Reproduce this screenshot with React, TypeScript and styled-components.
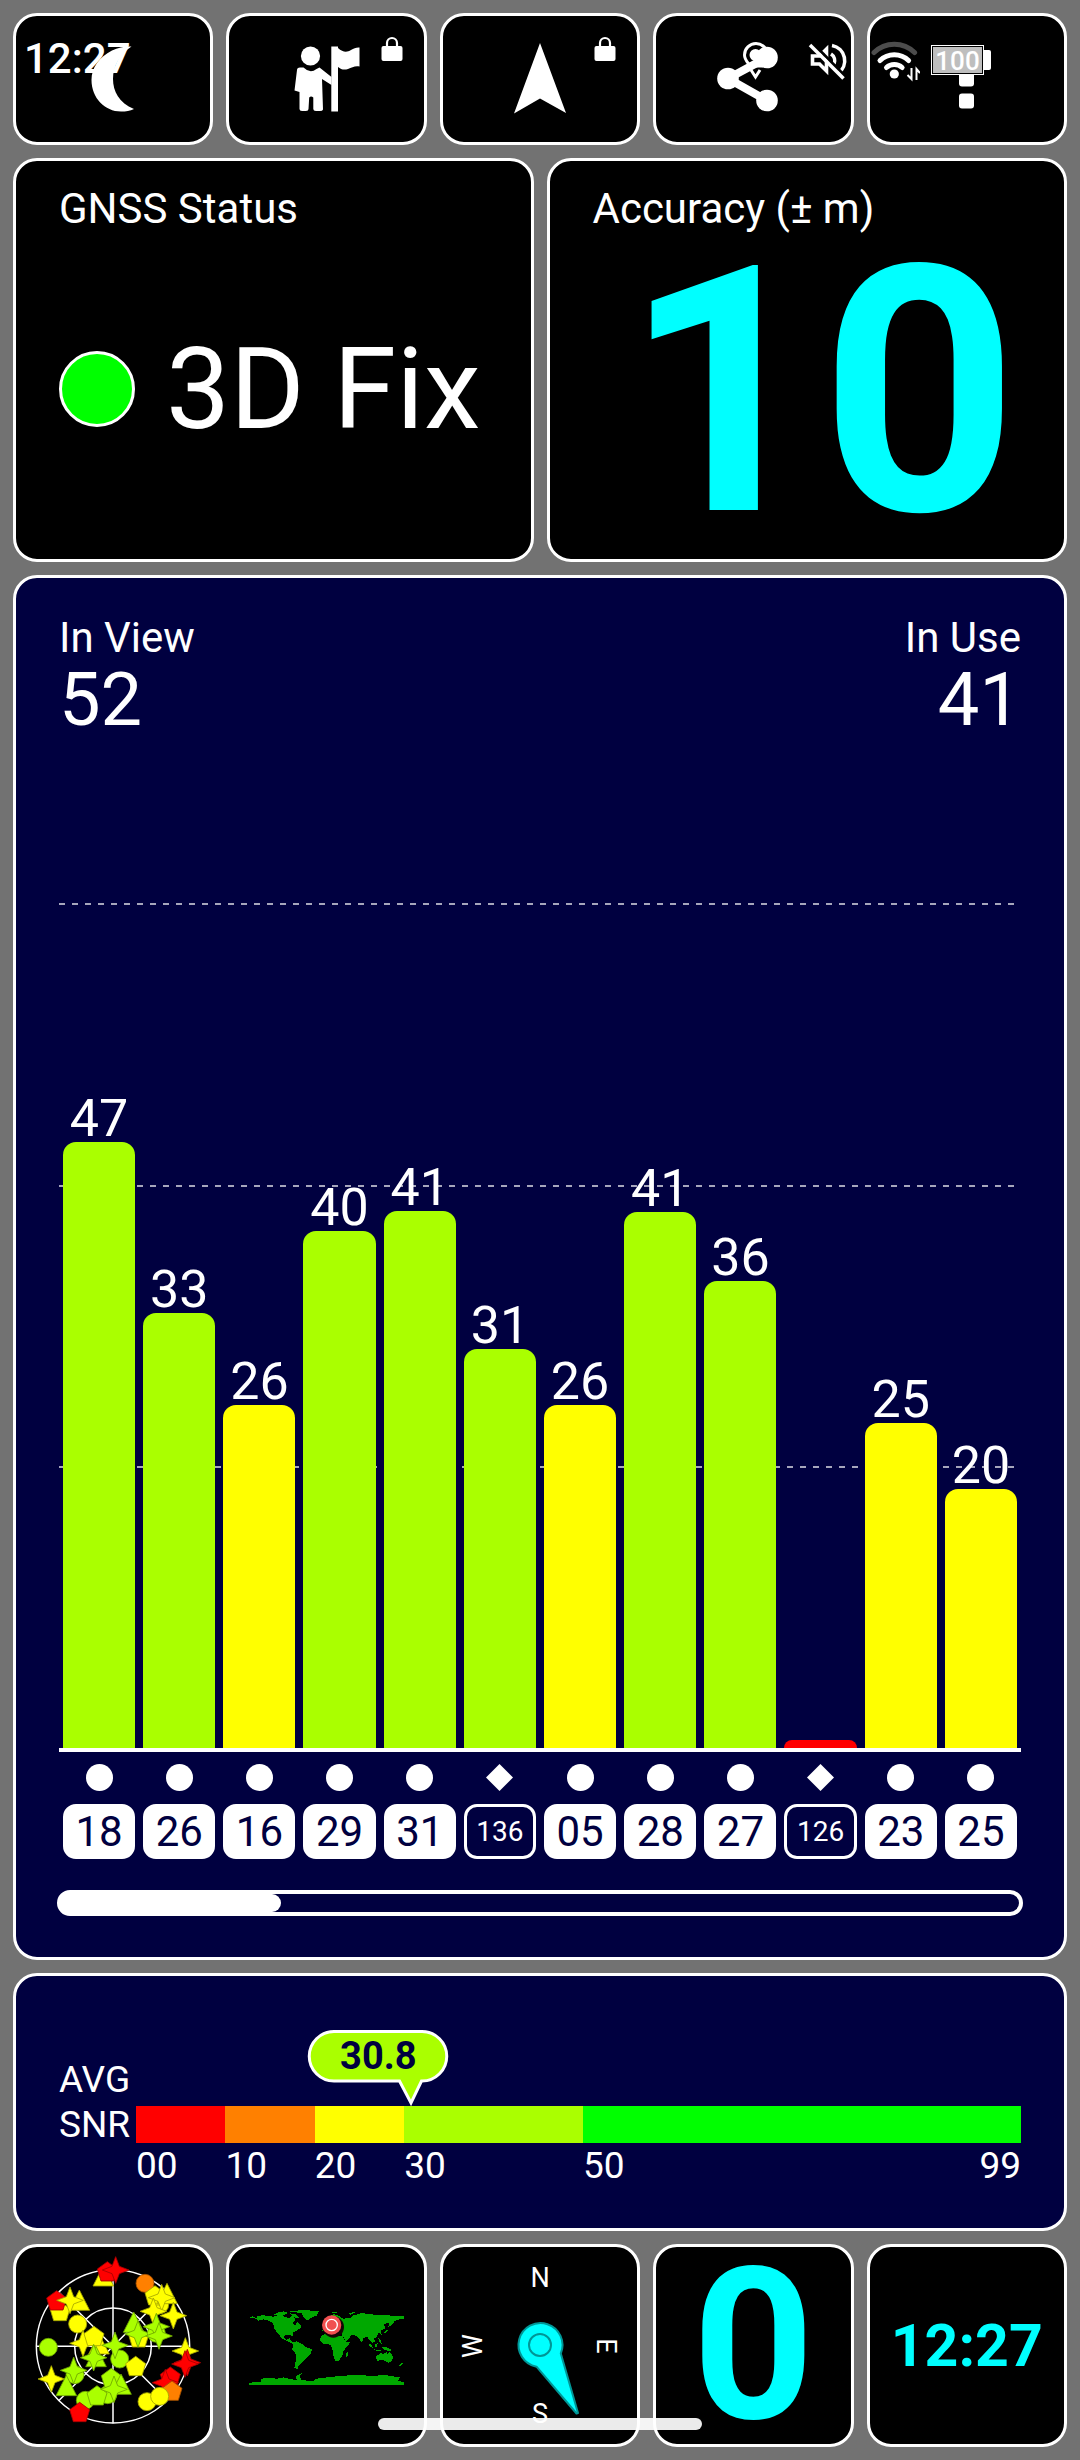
import React from "react";
import styled, { createGlobalStyle } from "styled-components";

const NAVY = "#000040";
const LIME = "#aaff00";
const YELLOW = "#ffff00";
const ORANGE = "#ff8000";
const RED = "#ff0000";
const GREEN = "#00ff00";
const CYAN = "#00ffff";
const MAX_SNR = 65;

const GlobalStyle = createGlobalStyle`
  *, *::before, *::after { box-sizing: border-box; }
  body {
    margin: 0;
    background: #727272;
    color: #fff;
    font-family: Roboto, "Noto Sans", sans-serif;
  }
`;

const Screen = styled.main`
  position: relative;
  min-height: 100vh;
  padding: 13px;
  display: grid;
  grid-template-rows: 132fr 404fr 1385fr 258fr 203fr;
  gap: 13px;
`;

const TileRow = styled.nav`
  display: grid;
  grid-template-columns: repeat(5, minmax(0, 1fr));
  gap: 13px;
`;

const Tile = styled.button`
  position: relative;
  display: flex;
  align-items: center;
  justify-content: center;
  padding: 0;
  border: 3px solid #fff;
  border-radius: 24px;
  background: #000;
  color: #fff;
  font-family: inherit;
`;

const LockBadge = styled.svg`
  position: absolute;
  top: 20px;
  right: 21px;
  width: 22px;
  height: 26px;
`;

const TileValue = styled.span<{ $size: number }>`
  color: ${CYAN};
  font-size: ${(p) => p.$size}px;
  line-height: 160px;
  font-weight: 700;
`;

const StatusRow = styled.section`
  display: grid;
  grid-template-columns: repeat(2, minmax(0, 1fr));
  gap: 13px;
`;

const Card = styled.section<{ $tone?: string }>`
  display: flex;
  flex-direction: column;
  border: 3px solid #fff;
  border-radius: 24px;
  background: ${(p) => p.$tone ?? "#000"};
`;

const StatusCard = styled(Card)`
  padding: 23px 43px 15px;
`;

const Caption = styled.h2`
  margin: 0;
  font-size: 42px;
  line-height: 50px;
  font-weight: 400;
`;

const FixBody = styled.div`
  flex: 1;
  display: flex;
  align-items: center;
  gap: 31px;
  font-size: 114px;
  line-height: 134px;
`;

const FixLamp = styled.span`
  width: 76px;
  height: 76px;
  border: 3px solid #fff;
  border-radius: 50%;
  background: ${GREEN};
`;

const AccuracyBody = styled.div`
  flex: 1;
  display: flex;
  align-items: center;
  justify-content: flex-end;
  padding: 8px 3px 0 0;
  color: ${CYAN};
  font-size: 344px;
  line-height: 250px;
  font-weight: 700;
`;

const ChartCard = styled(Card)`
  padding: 35px 43px 41px;
`;

const Counts = styled.div`
  display: flex;
  justify-content: space-between;
`;

const Count = styled.div<{ $end?: boolean }>`
  text-align: ${(p) => (p.$end ? "right" : "left")};
`;

const CountValue = styled.div`
  font-size: 74px;
  line-height: 74px;
`;

const Plot = styled.div`
  position: relative;
  flex: 1;
  display: grid;
  margin-top: 166px;
  border-bottom: 4px solid #fff;
`;

const GridLines = styled.div`
  position: absolute;
  inset: 0;
  display: grid;
  grid-template-rows: repeat(3, 1fr);
`;

const GridLine = styled.div`
  background: repeating-linear-gradient(
      90deg,
      rgba(255, 255, 255, 0.65) 0 6px,
      transparent 6px 13px
    )
    top left / 100% 2px no-repeat;
`;

const Columns = styled.div`
  display: grid;
  grid-template-columns: repeat(12, minmax(0, 1fr));
  gap: 8px;
  padding: 0 4px;
`;

const PlotColumns = styled(Columns)`
  position: relative;
`;

const BarColumn = styled.div`
  display: flex;
  flex-direction: column;
  justify-content: flex-end;
  align-items: stretch;
`;

const BarLabel = styled.span`
  font-size: 52px;
  line-height: 46px;
  text-align: center;
`;

const Bar = styled.div<{ $color: string }>`
  flex: none;
  border-radius: 13px 13px 0 0;
  background: ${(p) => p.$color};
`;

const SatColumns = styled(Columns)`
  padding-top: 12px;
`;

const Sat = styled.div`
  display: flex;
  flex-direction: column;
  align-items: center;
  gap: 13px;
`;

const SatId = styled.span<{ $outline?: boolean }>`
  display: flex;
  align-items: center;
  justify-content: center;
  width: 100%;
  height: 55px;
  border: 3px solid #fff;
  border-radius: 13px;
  background: ${(p) => (p.$outline ? NAVY : "#fff")};
  color: ${(p) => (p.$outline ? "#fff" : NAVY)};
  font-size: ${(p) => (p.$outline ? 28 : 42)}px;
  line-height: 49px;
`;

const ScrollTrack = styled.div`
  height: 26px;
  margin: 31px -2px 0;
  border: 4px solid #fff;
  border-radius: 13px;
`;

const ScrollThumb = styled.div`
  width: 23%;
  height: 100%;
  border-radius: 0 9px 9px 0;
  background: #fff;
`;

const SnrCard = styled(Card)`
  flex-direction: row;
  align-items: flex-start;
  padding: 81px 43px 0;
  font-size: 37px;
  line-height: 45px;
`;

const SnrTitle = styled.div`
  width: 77px;
`;

const SnrScale = styled.div`
  position: relative;
  flex: 1;
  display: flex;
  margin-top: 49px;
`;

const Band = styled.div<{ $span: number }>`
  flex: ${(p) => p.$span} 1 0;
  min-width: 0;
`;

const BandFill = styled.div<{ $color: string }>`
  height: 37px;
  background: ${(p) => p.$color};
`;

const BandTicks = styled.div`
  display: flex;
  justify-content: space-between;
`;

const Callout = styled.div`
  position: absolute;
  bottom: 100%;
  width: 142px;
  height: 76px;
  transform: translate(-104px, 0);
  color: ${NAVY};
  font-size: 38px;
  line-height: 52px;
  font-weight: 700;
  text-align: center;
`;

const CalloutShape = styled.svg`
  position: absolute;
  top: 0;
  left: 0;
`;

const CalloutText = styled.span`
  position: relative;
`;

const StatusBar = styled.header`
  position: absolute;
  top: 0;
  left: 0;
  right: 0;
  display: flex;
  align-items: flex-start;
  justify-content: space-between;
  padding: 34px 89px 0 24px;
  pointer-events: none;
`;

const Clock = styled.time`
  font-size: 42px;
  line-height: 50px;
  font-weight: 500;
`;

const StatusIcons = styled.div`
  display: flex;
  gap: 11px;
`;

const Battery = styled.div`
  display: flex;
  align-items: center;
  padding-top: 11px;
  height: 41px;
`;

const BatteryCell = styled.span`
  width: 53px;
  height: 30px;
  border: 1px solid #fff;
  outline: 1px solid #000;
  outline-offset: -2px;
  background: #bebebe;
  font-size: 26px;
  line-height: 30px;
  font-weight: 500;
  text-align: center;
`;

const BatteryNub = styled.span`
  width: 7px;
  height: 20px;
  border-radius: 0 2px 2px 0;
  background: #fff;
`;

const HomeHandle = styled.div`
  position: absolute;
  left: 35%;
  width: 30%;
  bottom: 30px;
  height: 12px;
  border-radius: 6px;
  background: rgba(255, 255, 255, 0.92);
  pointer-events: none;
`;

const LockIcon = () => (
  <LockBadge viewBox="0 0 22 26" aria-hidden="true">
    <path d="M6 11V7a5 5 0 0 1 10 0v4" fill="none" stroke="#fff" strokeWidth="2.2" />
    <rect x="0.5" y="10" width="21" height="15" rx="2" fill="#fff" />
  </LockBadge>
);

const MoonIcon = () => (
  <svg width="44" height="66" viewBox="0 0 44 66" fill="#fff" aria-hidden="true">
    <path d="M40.500 0.500C35 0 28 1 21 4.500C8 11 0.500 22 0.500 34C0.500 52 14 65.500 30 65.500C35 65.500 39 65 43 63C28 57 22 45 22 33C22 20 29 8 40.500 0.500Z" />
  </svg>
);

const ScoutIcon = () => (
  <svg width="66" height="66" viewBox="0 0 66 66" fill="#fff" aria-hidden="true">
    <circle cx="16.500" cy="10" r="9.600" />
    <path d="M37.300 0.500H44V65.500H37.300Z" />
    <path d="M44 2C49 6.500 53 6.500 57 4C60 2.200 62 1.300 65.500 1.500V20.500C61 19.500 58 21.500 54 23C50 24.200 47 23.500 44 21Z" />
    <path d="M3 24Q3 21.500 6 21.500L9.500 21.500Q16 28 22.500 23L25.500 21.500L37.500 31V39L28 33L29 63.500Q28.500 65 26 65H22Q19.300 65 19.300 63V51.500Q17 49.500 15.200 51.500L14.500 63Q14.500 65 12 65H8Q5.500 65 5.500 63V46L0.500 44.500Z" />
  </svg>
);

const ArrowIcon = () => (
  <svg width="54" height="72" viewBox="0 0 54 72" fill="#fff" aria-hidden="true">
    <path d="M27 0L53 70L27 55.500L1 70.500Z" />
  </svg>
);

const ShareIcon = () => (
  <svg width="72" height="66" viewBox="0 0 72 66" fill="#fff" aria-hidden="true">
    <circle cx="11" cy="32.500" r="10.800" />
    <circle cx="50" cy="11.500" r="10.800" />
    <circle cx="50" cy="54.500" r="10.800" />
    <path d="M50 11.500L11 32.500L50 54.500" fill="none" stroke="#fff" strokeWidth="8" />
  </svg>
);

const MoreIcon = () => (
  <svg width="15" height="59" viewBox="0 0 15 59" fill="#fff" aria-hidden="true">
    <rect width="15" height="15" rx="3" />
    <rect y="21.500" width="15" height="15" rx="3" />
    <rect y="43.500" width="15" height="15" rx="3" />
  </svg>
);

const PlaceGlyph = () => (
  <svg width="54" height="50" viewBox="743 34 54 50" fill="none" stroke="#fff" strokeWidth="3" aria-hidden="true">
    <path d="M744.500 55a11.500 11.500 0 1 1 23 0c0 5-4 8-5.800 11h-11.500c-1.800-3-5.700-6-5.700-11Z" />
    <path d="M751 70L755.500 77L760 70" />
    <circle cx="755.500" cy="55" r="4.500" fill="#fff" />
  </svg>
);

const MutedGlyph = () => (
  <svg width="52" height="50" viewBox="808 34 52 50" fill="none" stroke="#fff" strokeWidth="3.600" aria-hidden="true">
    <path d="M812.500 56h7l7-7v22l-7-7h-7Z" />
    <path d="M832 45.500a15.500 15.500 0 0 1 6 28M831 54a8 8 0 0 1 3 10" />
    <path d="M813 43.500L846 77" stroke="#000" strokeWidth="3" />
    <path d="M810 45L843.500 78.500" />
  </svg>
);

const WifiGlyph = () => (
  <svg width="49" height="50" viewBox="871 34 49 50" fill="none" stroke="#fff" strokeLinecap="round" strokeWidth="5" aria-hidden="true">
    <path d="M874 52.500a29 29 0 0 1 40.600 0" stroke="#4c4c4c" />
    <path d="M880 60.500a20.500 20.500 0 0 1 28.600 0" />
    <path d="M886.500 67.500a11.500 11.500 0 0 1 15.600 0" />
    <circle cx="894.300" cy="74" r="4.600" fill="#fff" stroke="none" />
    <path d="M911.500 68V79L907.500 75M916.500 80V69L920 73" strokeWidth="2" strokeLinecap="butt" />
  </svg>
);

type Kind = "circle" | "triangle" | "pentagon" | "star";
const POLYGONS: Record<Exclude<Kind, "circle">, string> = {
  triangle: "0,-35 31,26 -31,26",
  pentagon: "0,-31 30,-9 19,27 -19,27 -30,-9",
  star: "0,-40 11,-11 40,0 11,11 0,40 -11,11 -40,0 -11,-11",
};
const EDGE: Record<string, string> = {
  [LIME]: "#6ea500",
  [YELLOW]: "#a5a500",
  [ORANGE]: "#a55200",
  [RED]: "#a50000",
};

const SKY: [Kind, number, number, string][] = [
  ["triangle", 311, 140, YELLOW],
  ["pentagon", 323, 124, RED],
  ["star", 348, 118, RED],
  ["circle", 436, 158, ORANGE],
  ["circle", 480, 222, YELLOW],
  ["pentagon", 466, 196, YELLOW],
  ["triangle", 502, 193, YELLOW],
  ["star", 486, 201, YELLOW],
  ["star", 461, 242, YELLOW],
  ["star", 521, 255, YELLOW],
  ["pentagon", 181, 243, YELLOW],
  ["pentagon", 171, 211, RED],
  ["triangle", 239, 213, YELLOW],
  ["star", 211, 209, YELLOW],
  ["circle", 234, 280, YELLOW],
  ["circle", 146, 350, LIME],
  ["triangle", 298, 344, YELLOW],
  ["star", 250, 338, YELLOW],
  ["pentagon", 283, 318, YELLOW],
  ["pentagon", 417, 322, YELLOW],
  ["triangle", 402, 279, LIME],
  ["star", 415, 310, LIME],
  ["circle", 470, 308, LIME],
  ["star", 470, 288, LIME],
  ["star", 478, 316, LIME],
  ["circle", 360, 385, LIME],
  ["star", 346, 344, LIME],
  ["pentagon", 408, 408, YELLOW],
  ["triangle", 289, 382, LIME],
  ["star", 282, 381, LIME],
  ["star", 557, 361, YELLOW],
  ["star", 563, 396, RED],
  ["star", 556, 400, RED],
  ["pentagon", 512, 440, RED],
  ["star", 497, 456, RED],
  ["pentagon", 517, 482, ORANGE],
  ["circle", 442, 513, YELLOW],
  ["circle", 480, 497, YELLOW],
  ["star", 155, 445, YELLOW],
  ["circle", 226, 432, LIME],
  ["star", 222, 419, LIME],
  ["triangle", 200, 469, LIME],
  ["circle", 257, 509, LIME],
  ["circle", 324, 492, LIME],
  ["pentagon", 292, 496, LIME],
  ["pentagon", 335, 444, LIME],
  ["triangle", 364, 465, LIME],
  ["star", 343, 476, LIME],
  ["pentagon", 240, 546, RED],
];

const SkyPlot = () => (
  <svg width="194" height="196" viewBox="49 52 582 588" aria-hidden="true">
    <g fill="none" stroke="#fff" strokeWidth="4.500">
      <circle cx="340" cy="347" r="230" />
      <circle cx="340" cy="347" r="115" />
      <path d="M340 116V578M109 347H571M177 184L503 510M503 184L177 510" />
    </g>
    {SKY.map(([kind, x, y, color], i) => (
      <g key={i} transform={`translate(${x} ${y})`} fill={color} stroke={EDGE[color]} strokeWidth="2.500">
        {kind === "circle" ? <circle r="27" /> : <polygon points={POLYGONS[kind]} />}
      </g>
    ))}
  </svg>
);

const WorldMap = () => (
  <svg width="194" height="196" viewBox="689 52 582 588" aria-hidden="true">
    <g fill="#00a800" shapeRendering="crispEdges">
      <path d="M747 261L757 257L768 262L772 255L790 254L818 258L836 254L850 257L866 262L878 252L886 268L876 276L884 284L892 274L904 286L900 292L888 300L878 306L876 318L868 312L856 312L849 320L857 328L868 322L874 333L884 337L878 341L862 332L846 324L834 310L822 294L818 278L806 270L790 266L774 270L768 264Z" />
      <path d="M866 242L900 239L956 240L950 254L932 262L922 269L912 262L904 248L880 244Z" />
      <path d="M820 252L832 246L850 242L862 246L852 254L834 256ZM868 248L884 250L896 260L890 264L878 256Z" />
      <path d="M878 336L890 332L906 340L914 349L935 356L930 370L918 382L908 394L898 402L892 408L894 416L882 412L886 392L888 372L876 356Z" />
      <path d="M962 318L975 308L996 308L1010 314L1026 316L1034 332L1050 334L1040 348L1030 360L1026 376L1014 391L1004 390L998 372L996 354L990 342L968 340L958 328Z" />
      <path d="M1036 370L1044 362L1042 374L1038 379Z" />
      <path d="M966 300L968 288L984 282L990 268L980 262L1000 250L1018 256L1030 266L1036 262L1052 262L1060 254L1086 247L1104 250L1130 253L1160 254L1190 256L1212 256L1212 266L1198 266L1184 270L1172 285L1164 288L1168 276L1150 280L1156 292L1142 300L1144 312L1134 306L1128 320L1120 324L1124 332L1116 338L1108 328L1100 318L1090 322L1084 336L1074 320L1064 314L1052 312L1048 322L1036 332L1026 314L1022 304L1000 302L990 298L976 304Z" />
      <path d="M1152 306L1160 296L1164 298L1158 306ZM1104 336L1116 346L1118 354L1108 346ZM1122 342L1132 338L1130 350L1124 348ZM1120 356L1134 358L1146 360L1134 362ZM1134 322L1142 328L1144 340L1138 334ZM1146 350L1160 350L1174 358L1166 362L1150 356Z" />
      <path d="M1127 378L1140 367L1150 370L1158 364L1162 370L1168 362L1179 380L1174 392L1164 397L1150 388L1130 390Z" />
      <path d="M1196 404L1206 396L1208 400L1200 406ZM1045 249L1060 243L1066 246L1050 252ZM994 244L1012 243L1008 248L998 248Z" />
      <path d="M747 456L780 454L784 444L806 442L830 444L850 440L874 446L890 448L886 436L906 427L898 438L904 448L935 452L950 444L980 440L1010 437L1060 433L1110 435L1160 434L1198 440L1194 450L1212 456L1212 462L747 462Z" />
    </g>
    <circle cx="999" cy="289" r="32" fill="#140505" />
    <circle cx="994" cy="283" r="29" fill="#f05050" />
    <circle cx="994" cy="283" r="17" fill="none" stroke="#fff" strokeWidth="4" />
  </svg>
);

const Compass = () => (
  <svg width="194" height="196" viewBox="-97 -98 194 196" aria-hidden="true">
    <g fill="#fff" fontFamily="Roboto, sans-serif" fontSize="27" textAnchor="middle">
      <text y="-59">N</text>
      <text y="77">S</text>
      <text transform="translate(-58 0) rotate(-90)">W</text>
      <text transform="translate(57 0) rotate(90)">E</text>
    </g>
    <path
      d="M-3.500 20.700A22 22 0 1 1 20.800 7.500L38 67L36.500 67.500Z"
      fill={CYAN}
      stroke="#009696"
      strokeWidth="2"
      strokeLinejoin="round"
    />
    <circle cy="-1" r="11" fill="none" stroke="#009696" strokeWidth="2" />
  </svg>
);

interface Satellite {
  id: string;
  snr: number;
  label?: string;
  sbas?: boolean;
}

const SATELLITES: Satellite[] = [
  { id: "18", snr: 46.6, label: "47" },
  { id: "26", snr: 33.5, label: "33" },
  { id: "16", snr: 26.4, label: "26" },
  { id: "29", snr: 39.8, label: "40" },
  { id: "31", snr: 41.3, label: "41" },
  { id: "136", snr: 30.7, label: "31", sbas: true },
  { id: "05", snr: 26.4, label: "26" },
  { id: "28", snr: 41.2, label: "41" },
  { id: "27", snr: 35.9, label: "36" },
  { id: "126", snr: 0.6, sbas: true },
  { id: "23", snr: 25, label: "25" },
  { id: "25", snr: 19.9, label: "20" },
];

const BANDS = [
  { span: 10, color: RED, ticks: ["00"] },
  { span: 10, color: ORANGE, ticks: ["10"] },
  { span: 10, color: YELLOW, ticks: ["20"] },
  { span: 20, color: LIME, ticks: ["30"] },
  { span: 49, color: GREEN, ticks: ["50", "99"] },
];

const AVERAGE_SNR = 30.8;

function barColor(snr: number) {
  if (snr >= 30) return LIME;
  if (snr >= 19) return YELLOW;
  if (snr >= 10) return ORANGE;
  return RED;
}

export default function App() {
  return (
    <>
      <GlobalStyle />
      <Screen>
        <TileRow aria-label="Actions">
          <Tile aria-label="Night mode"><MoonIcon /></Tile>
          <Tile aria-label="Waypoints"><ScoutIcon /><LockIcon /></Tile>
          <Tile aria-label="Navigate"><ArrowIcon /><LockIcon /></Tile>
          <Tile aria-label="Share"><ShareIcon /></Tile>
          <Tile aria-label="More options"><MoreIcon /></Tile>
        </TileRow>

        <StatusRow>
          <StatusCard>
            <Caption>GNSS Status</Caption>
            <FixBody>
              <FixLamp />
              3D Fix
            </FixBody>
          </StatusCard>
          <StatusCard>
            <Caption>Accuracy (± m)</Caption>
            <AccuracyBody>10</AccuracyBody>
          </StatusCard>
        </StatusRow>

        <ChartCard $tone={NAVY}>
          <Counts>
            <Count>
              <Caption>In View</Caption>
              <CountValue>52</CountValue>
            </Count>
            <Count $end>
              <Caption>In Use</Caption>
              <CountValue>41</CountValue>
            </Count>
          </Counts>
          <Plot>
            <GridLines>
              <GridLine />
              <GridLine />
              <GridLine />
            </GridLines>
            <PlotColumns>
              {SATELLITES.map((s) => (
                <BarColumn key={s.id}>
                  {s.label && <BarLabel>{s.label}</BarLabel>}
                  <Bar $color={barColor(s.snr)} style={{ height: `${(s.snr / MAX_SNR) * 100}%` }} />
                </BarColumn>
              ))}
            </PlotColumns>
          </Plot>
          <SatColumns>
            {SATELLITES.map((s) => (
              <Sat key={s.id}>
                <svg width="27" height="27" viewBox="0 0 27 27" fill="#fff" aria-hidden="true">
                  {s.sbas ? <path d="M13.500 0L27 13.500L13.500 27L0 13.500Z" /> : <circle cx="13.500" cy="13.500" r="13.500" />}
                </svg>
                <SatId $outline={s.sbas}>{s.id}</SatId>
              </Sat>
            ))}
          </SatColumns>
          <ScrollTrack>
            <ScrollThumb />
          </ScrollTrack>
        </ChartCard>

        <SnrCard $tone={NAVY}>
          <SnrTitle>AVG SNR</SnrTitle>
          <SnrScale>
            {BANDS.map((b) => (
              <Band key={b.color} $span={b.span}>
                <BandFill $color={b.color} />
                <BandTicks>
                  {b.ticks.map((t) => (
                    <span key={t}>{t}</span>
                  ))}
                </BandTicks>
              </Band>
            ))}
            <Callout style={{ left: `${(AVERAGE_SNR / 99) * 100}%` }}>
              <CalloutShape width="142" height="78" viewBox="0 0 142 78" aria-hidden="true">
                <path
                  d="M27 1.500H115A24.700 24.700 0 0 1 115 51H114.500L104 73L92.500 51H27A24.700 24.700 0 0 1 27 1.500Z"
                  fill={LIME}
                  stroke="#fff"
                  strokeWidth="3"
                />
              </CalloutShape>
              <CalloutText>{AVERAGE_SNR}</CalloutText>
            </Callout>
          </SnrScale>
        </SnrCard>

        <TileRow aria-label="Pages">
          <Tile aria-label="Sky view"><SkyPlot /></Tile>
          <Tile aria-label="World map"><WorldMap /></Tile>
          <Tile aria-label="Compass"><Compass /></Tile>
          <Tile><TileValue $size={212}>0</TileValue></Tile>
          <Tile><TileValue $size={59}>12:27</TileValue></Tile>
        </TileRow>

        <StatusBar>
          <Clock>12:27</Clock>
          <StatusIcons>
            <PlaceGlyph />
            <MutedGlyph />
            <WifiGlyph />
            <Battery>
              <BatteryCell>100</BatteryCell>
              <BatteryNub />
            </Battery>
          </StatusIcons>
        </StatusBar>
        <HomeHandle />
      </Screen>
    </>
  );
}
